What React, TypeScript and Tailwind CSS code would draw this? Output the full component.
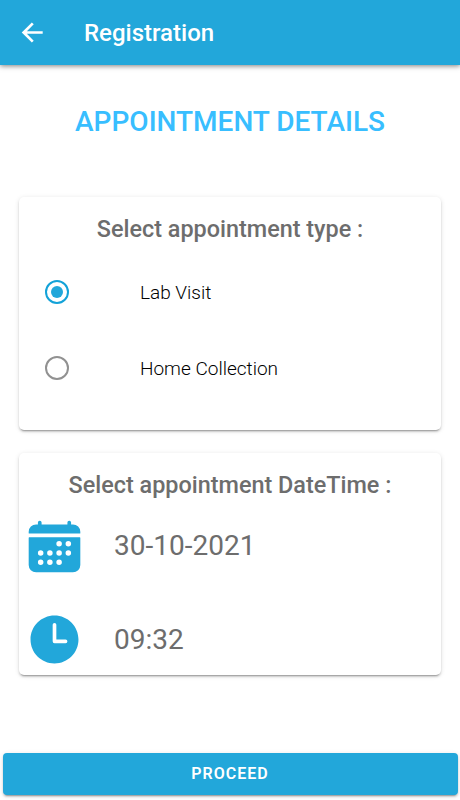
import { useState } from 'react';
import { IoArrowBackSharp, IoCalendar, IoTime } from 'react-icons/io5';

const appointmentTypes = ['Lab Visit', 'Home Collection'];

export default function App() {
  const [selected, setSelected] = useState('Lab Visit');

  return (
    <div className="h-[800px] w-[460px] flex flex-col overflow-hidden bg-white font-['Roboto',sans-serif]">
      <header className="h-[65px] shrink-0 flex items-center bg-[#22a7da] pl-[18px] text-white shadow-[0_1px_5px_rgba(0,0,0,0.5)]">
        <button aria-label="Back">
          <IoArrowBackSharp size={29} />
        </button>
        <h1 className="ml-[37px] text-[24px] leading-8 font-medium">Registration</h1>
      </header>

      <h2 className="mt-[39px] text-center text-[28px] leading-9 font-medium text-[#38beff]">
        APPOINTMENT DETAILS
      </h2>

      <section className="mx-[19px] mt-[56.5px] h-[233px] shrink-0 rounded-[5px] bg-white pt-[16.5px] shadow-[0_3px_1px_-2px_rgba(0,0,0,0.2),0_2px_2px_0_rgba(0,0,0,0.14),0_1px_5px_0_rgba(0,0,0,0.12)]">
        <h3 className="text-center text-[23.4px] leading-8 font-medium text-[#6d6d6d]">
          Select appointment type :
        </h3>
        <div className="mt-[9px]">
          {appointmentTypes.map((type) => (
            <button
              key={type}
              role="radio"
              aria-checked={selected === type}
              onClick={() => setSelected(type)}
              className="h-[76px] w-full flex items-center pl-[26.4px] text-left"
            >
              <span
                className={`size-6 rounded-full border-2 flex items-center justify-center ${
                  selected === type ? 'border-[#13a2d8]' : 'border-[#919191]'
                }`}
              >
                {selected === type && <span className="size-3 rounded-full bg-[#22a7da]" />}
              </span>
              <span className="ml-[70.6px] pt-0.5 text-[19px] font-light text-black">{type}</span>
            </button>
          ))}
        </div>
      </section>

      <section className="mx-[19px] mt-[23px] h-[222px] shrink-0 rounded-[5px] bg-white pt-[16.5px] shadow-[0_3px_1px_-2px_rgba(0,0,0,0.2),0_2px_2px_0_rgba(0,0,0,0.14),0_1px_5px_0_rgba(0,0,0,0.12)]">
        <h3 className="text-center text-[23.4px] leading-8 font-medium text-[#6d6d6d]">
          Select appointment DateTime :
        </h3>
        <div className="h-[90px] flex items-center pl-[5.5px]">
          <IoCalendar size={59} className="text-[#22a7da]" />
          <span className="ml-[30.5px] text-[28px] text-[#6d6d6d]">30-10-2021</span>
        </div>
        <div className="h-[97px] flex items-center pl-[5.5px]">
          <IoTime size={59} className="text-[#22a7da]" />
          <span className="ml-[30.5px] text-[28px] text-[#6d6d6d]">09:32</span>
        </div>
      </section>

      <button className="mx-[2.5px] mt-auto mb-[5px] h-[42px] shrink-0 rounded-[4px] bg-[#22a7da] text-[16px] font-semibold tracking-[1px] text-white shadow-[0_3px_1px_-2px_rgba(0,0,0,0.2),0_2px_2px_0_rgba(0,0,0,0.14),0_1px_5px_0_rgba(0,0,0,0.12)]">
        PROCEED
      </button>
    </div>
  );
}
